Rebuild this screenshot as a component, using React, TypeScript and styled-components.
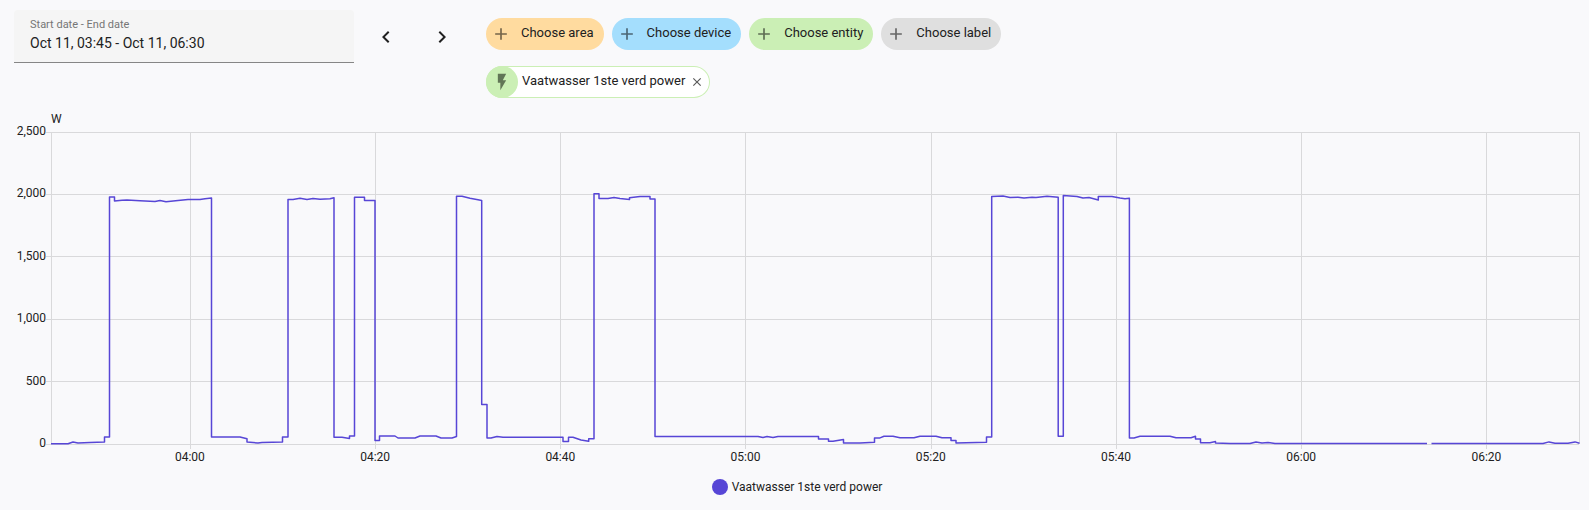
import React from "react";
import styled, { createGlobalStyle } from "styled-components";

const GlobalStyle = createGlobalStyle`
  *, *::before, *::after { box-sizing: border-box; }
  body {
    margin: 0;
    background: #f9f9fb;
    color: #212121;
    font-family: Roboto, "Noto Sans", sans-serif;
  }
`;

const Page = styled.main`
  display: flex;
  flex-direction: column;
  padding: 10px 10px 12px 14px;
`;

const Toolbar = styled.header`
  display: flex;
  align-items: flex-start;
`;

const DateField = styled.label`
  display: flex;
  flex-direction: column;
  width: 340px;
  height: 53px;
  padding: 8px 16px 0;
  border-bottom: 1px solid #868686;
  border-radius: 4px 4px 0 0;
  background: #f5f5f5;
`;

const FieldLabel = styled.span`
  font-size: 11px;
  line-height: 14px;
  color: #757575;
`;

const FieldInput = styled.input`
  width: 100%;
  height: 22px;
  padding: 0;
  border: 0;
  outline: 0;
  background: none;
  color: #212121;
  font: 14px/22px Roboto, sans-serif;
`;

const Pager = styled.nav`
  display: flex;
  gap: 8px;
  padding: 3px 20px 0 8px;
`;

const IconButton = styled.button<{ $size: number }>`
  display: flex;
  flex: none;
  align-items: center;
  justify-content: center;
  width: ${(p) => p.$size}px;
  height: ${(p) => p.$size}px;
  padding: 0;
  border: 0;
  background: none;
  color: inherit;
  cursor: pointer;
`;

const Targets = styled.section`
  display: flex;
  flex: 1;
  flex-direction: column;
  align-items: flex-start;
  gap: 16px;
  padding-top: 8px;
`;

const ChipRow = styled.div`
  display: flex;
  flex-wrap: wrap;
  gap: 8px;
`;

const AddChip = styled.button<{ $color: string }>`
  display: flex;
  align-items: center;
  gap: 10px;
  height: 32px;
  padding: 0 10px 0 5px;
  border: 0;
  border-radius: 16px;
  background: ${(p) => p.$color};
  color: #212121;
  font: 13px/20px Roboto, sans-serif;
  white-space: nowrap;
  cursor: pointer;

  span { padding-bottom: 2px; }
  svg { color: rgba(0, 0, 0, 0.54); }
`;

const EntityChip = styled.div`
  display: flex;
  align-items: center;
  height: 32px;
  padding-right: 3px;
  border-radius: 16px;
  background: #fff;
  box-shadow: inset 0 0 0 1px #cbefb5;
  font-size: 13px;
  line-height: 20px;
  white-space: nowrap;

  button { color: #5a5a5a; }
`;

const EntityBadge = styled.span`
  display: flex;
  align-items: center;
  justify-content: center;
  width: 32px;
  height: 32px;
  border-radius: 16px;
  background: #cbefb5;
  color: #617556;
`;

const EntityName = styled.span`
  padding: 0 2px 2px 4px;
`;

const Chart = styled.figure`
  display: grid;
  grid-template-columns: 32px 1fr;
  column-gap: 5px;
  margin: 13px 0 0;
`;

const Unit = styled.span`
  grid-column: 2;
  font-size: 12px;
  line-height: 16px;
  padding-bottom: 5px;
`;

const ValueAxis = styled.div`
  display: flex;
  flex-direction: column;
  justify-content: space-between;
  height: 328px;
  margin: -9px 0 -7px;
  font-size: 12px;
  line-height: 16px;
  text-align: right;
`;

const Plot = styled.svg`
  display: block;
  width: 100%;
  height: 312px;
  overflow: visible;
`;

const TimeAxis = styled.svg`
  display: block;
  grid-column: 2;
  width: 100%;
  height: 26px;
  overflow: visible;
  font-size: 12px;
  fill: #212121;
  text-anchor: middle;
`;

const Legend = styled.figcaption`
  display: flex;
  grid-column: 1 / -1;
  align-items: center;
  justify-content: center;
  gap: 4px;
  padding: 8px 0 0 1px;
  font-size: 12px;
  line-height: 18px;
`;

const LegendDot = styled.span`
  width: 16px;
  height: 16px;
  border-radius: 50%;
  background: #5746d6;
`;

const icons = {
  left: "M15.41,16.58L10.83,12L15.41,7.41L14,6L8,12L14,18L15.41,16.58Z",
  right: "M8.59,16.58L13.17,12L8.59,7.41L10,6L16,12L10,18L8.59,16.58Z",
  plus: "M19,13H13V19H11V13H5V11H11V5H13V11H19V13Z",
  flash: "M7,2V13H10V22L17,10H13L17,2H7Z",
  close:
    "M19,6.41L17.59,5L12,10.59L6.41,5L5,6.41L10.59,12L5,17.59L6.41,19L12,13.41L17.59,19L19,17.59L13.41,12L19,6.41Z",
};

function Icon({ name, size }: { name: keyof typeof icons; size: number }) {
  return (
    <svg width={size} height={size} viewBox="0 0 24 24" fill="currentColor" aria-hidden="true">
      <path d={icons[name]} />
    </svg>
  );
}

const addTargets = [
  { label: "Choose area", color: "#ffdb9f" },
  { label: "Choose device", color: "#a4defd" },
  { label: "Choose entity", color: "#cbefb5" },
  { label: "Choose label", color: "#dfdfdf" },
];

const values = ["2,500", "2,000", "1,500", "1,000", "500", "0"];

const START = 3 * 60 + 45;
const SPAN = 165;
const times = ["04:00", "04:20", "04:40", "05:00", "05:20", "05:40", "06:00", "06:20"];

const position = (time: string) => {
  const [hours, minutes] = time.split(":").map(Number);
  return `${((hours * 60 + minutes - START) / SPAN) * 100}%`;
};

const power = `
  M51,443.8 L68,443.7 L73,442 L78,443 L90,442.5 L104.5,442 V437 H109.5
  V197 H114.5 V201 L122,200.3 L127,200 L140,200.7 L155,201.5 L160,200.5 L166,201.7 L178,200.5 L188,199.4 L200,199.4 L205,198.7 L211.5,198
  V437 H240 L247,438.7 V442 L258,443 L262,442.5 L282.5,442 V437 H288
  V199.6 L293,199.5 L300,198.3 L307,199.5 L313,198.5 L320,199.3 L330,198.8 L334,197.7
  V437.3 H342 L349.5,438.5 V436 H354.5 V197.3 H364.5 V200.5 H375
  V440.4 H379.5 V436 H395 L398,438 H415 L420,436 H436 L441,438 H452 L456.5,436.5
  V196.3 H462 L470,198.3 L478,199.7 L481.7,200.4 V404.4 H487 V438 H491 L497,436.5 L503,437.3 H563
  V441.4 H568.5 V437.3 H573 L581,440 L588.7,441.3 V438.8 H594
  V193.7 H599 V198.5 H608 L614,197.6 L620,198.5 L629.5,199.6 V197.8 L640,196.4 H650 V199 H655
  V436.4 H758 L763,437.5 L767,436.5 L773,437.5 L778,436.4 H818.5 V439 H828.5 V441.2 H833 L843.5,439.6
  V442.9 H860 L874.5,442.2 V437.9 H880 L884,436.2 H893 L900,437.8 H914 L920,436.2 H936 L942,437.8 H951
  V440.6 H956 V443 L986.5,442.3 V437 H991.7
  V196.5 L1003,196 L1010,197.4 L1018,197.2 L1024,198 L1032,197.2 L1036,197.6 L1047,196.2 L1058.2,197.2
  V436.2 H1063.3 V195.5 L1077,196.6 L1083,197.9 L1089,197.6 L1098.3,200 V196.4 H1112 L1120,198 L1125,198.7 L1129.4,198.3
  V438 H1134 L1140,436.2 H1170 L1176,437.8 H1191 L1195.5,436.3 V439 H1200.5 V442.7 H1210 L1215.5,441.6 V442.9
  L1230,443.6 L1250,443.4 L1256,442 L1262,443 L1268,442.6 L1275,443.5 H1427
  M1431.5,443.5 H1543 L1549,441.9 L1555,443.2 H1568 L1575,441.9 L1579.5,443.3`;

export default function App() {
  return (
    <>
      <GlobalStyle />
      <Page>
        <Toolbar>
          <DateField>
            <FieldLabel>Start date - End date</FieldLabel>
            <FieldInput type="text" defaultValue="Oct 11, 03:45 - Oct 11, 06:30" />
          </DateField>
          <Pager>
            <IconButton $size={48} type="button" aria-label="Previous">
              <Icon name="left" size={24} />
            </IconButton>
            <IconButton $size={48} type="button" aria-label="Next">
              <Icon name="right" size={24} />
            </IconButton>
          </Pager>
          <Targets>
            <ChipRow>
              {addTargets.map((t) => (
                <AddChip key={t.label} $color={t.color} type="button">
                  <Icon name="plus" size={20} />
                  <span>{t.label}</span>
                </AddChip>
              ))}
            </ChipRow>
            <EntityChip>
              <EntityBadge>
                <Icon name="flash" size={20} />
              </EntityBadge>
              <EntityName>Vaatwasser 1ste verd power</EntityName>
              <IconButton $size={20} type="button" aria-label="Remove">
                <Icon name="close" size={14} />
              </IconButton>
            </EntityChip>
          </Targets>
        </Toolbar>

        <Chart>
          <Unit>W</Unit>
          <ValueAxis>
            {values.map((v) => (
              <span key={v}>{v}</span>
            ))}
          </ValueAxis>
          <Plot role="img" aria-label="Power in watts over time">
            <g stroke="#d9d9db" shapeRendering="crispEdges">
              {values.map((v, i) => (
                <line key={v} x1="-5" x2="100%" y1={`${i * 20}%`} y2={`${i * 20}%`} />
              ))}
              <g transform="translate(0.3 0)">
                <line x1="0" x2="0" y1="0" y2="100%" />
                <line x1="100%" x2="100%" y1="0" y2="100%" />
                {times.map((t) => (
                  <line key={t} x1={position(t)} x2={position(t)} y1="0" y2="317" />
                ))}
              </g>
            </g>
            <svg
              width="100%"
              height="100%"
              viewBox="51 132 1528 312"
              preserveAspectRatio="none"
              overflow="visible"
            >
              <path
                d={power}
                fill="none"
                stroke="#5746d6"
                strokeWidth="1.5"
                strokeLinejoin="round"
                vectorEffect="non-scaling-stroke"
              />
            </svg>
          </Plot>
          <TimeAxis>
            {times.map((t) => (
              <text key={t} x={position(t)} y="17">
                {t}
              </text>
            ))}
          </TimeAxis>
          <Legend>
            <LegendDot />
            Vaatwasser 1ste verd power
          </Legend>
        </Chart>
      </Page>
    </>
  );
}
